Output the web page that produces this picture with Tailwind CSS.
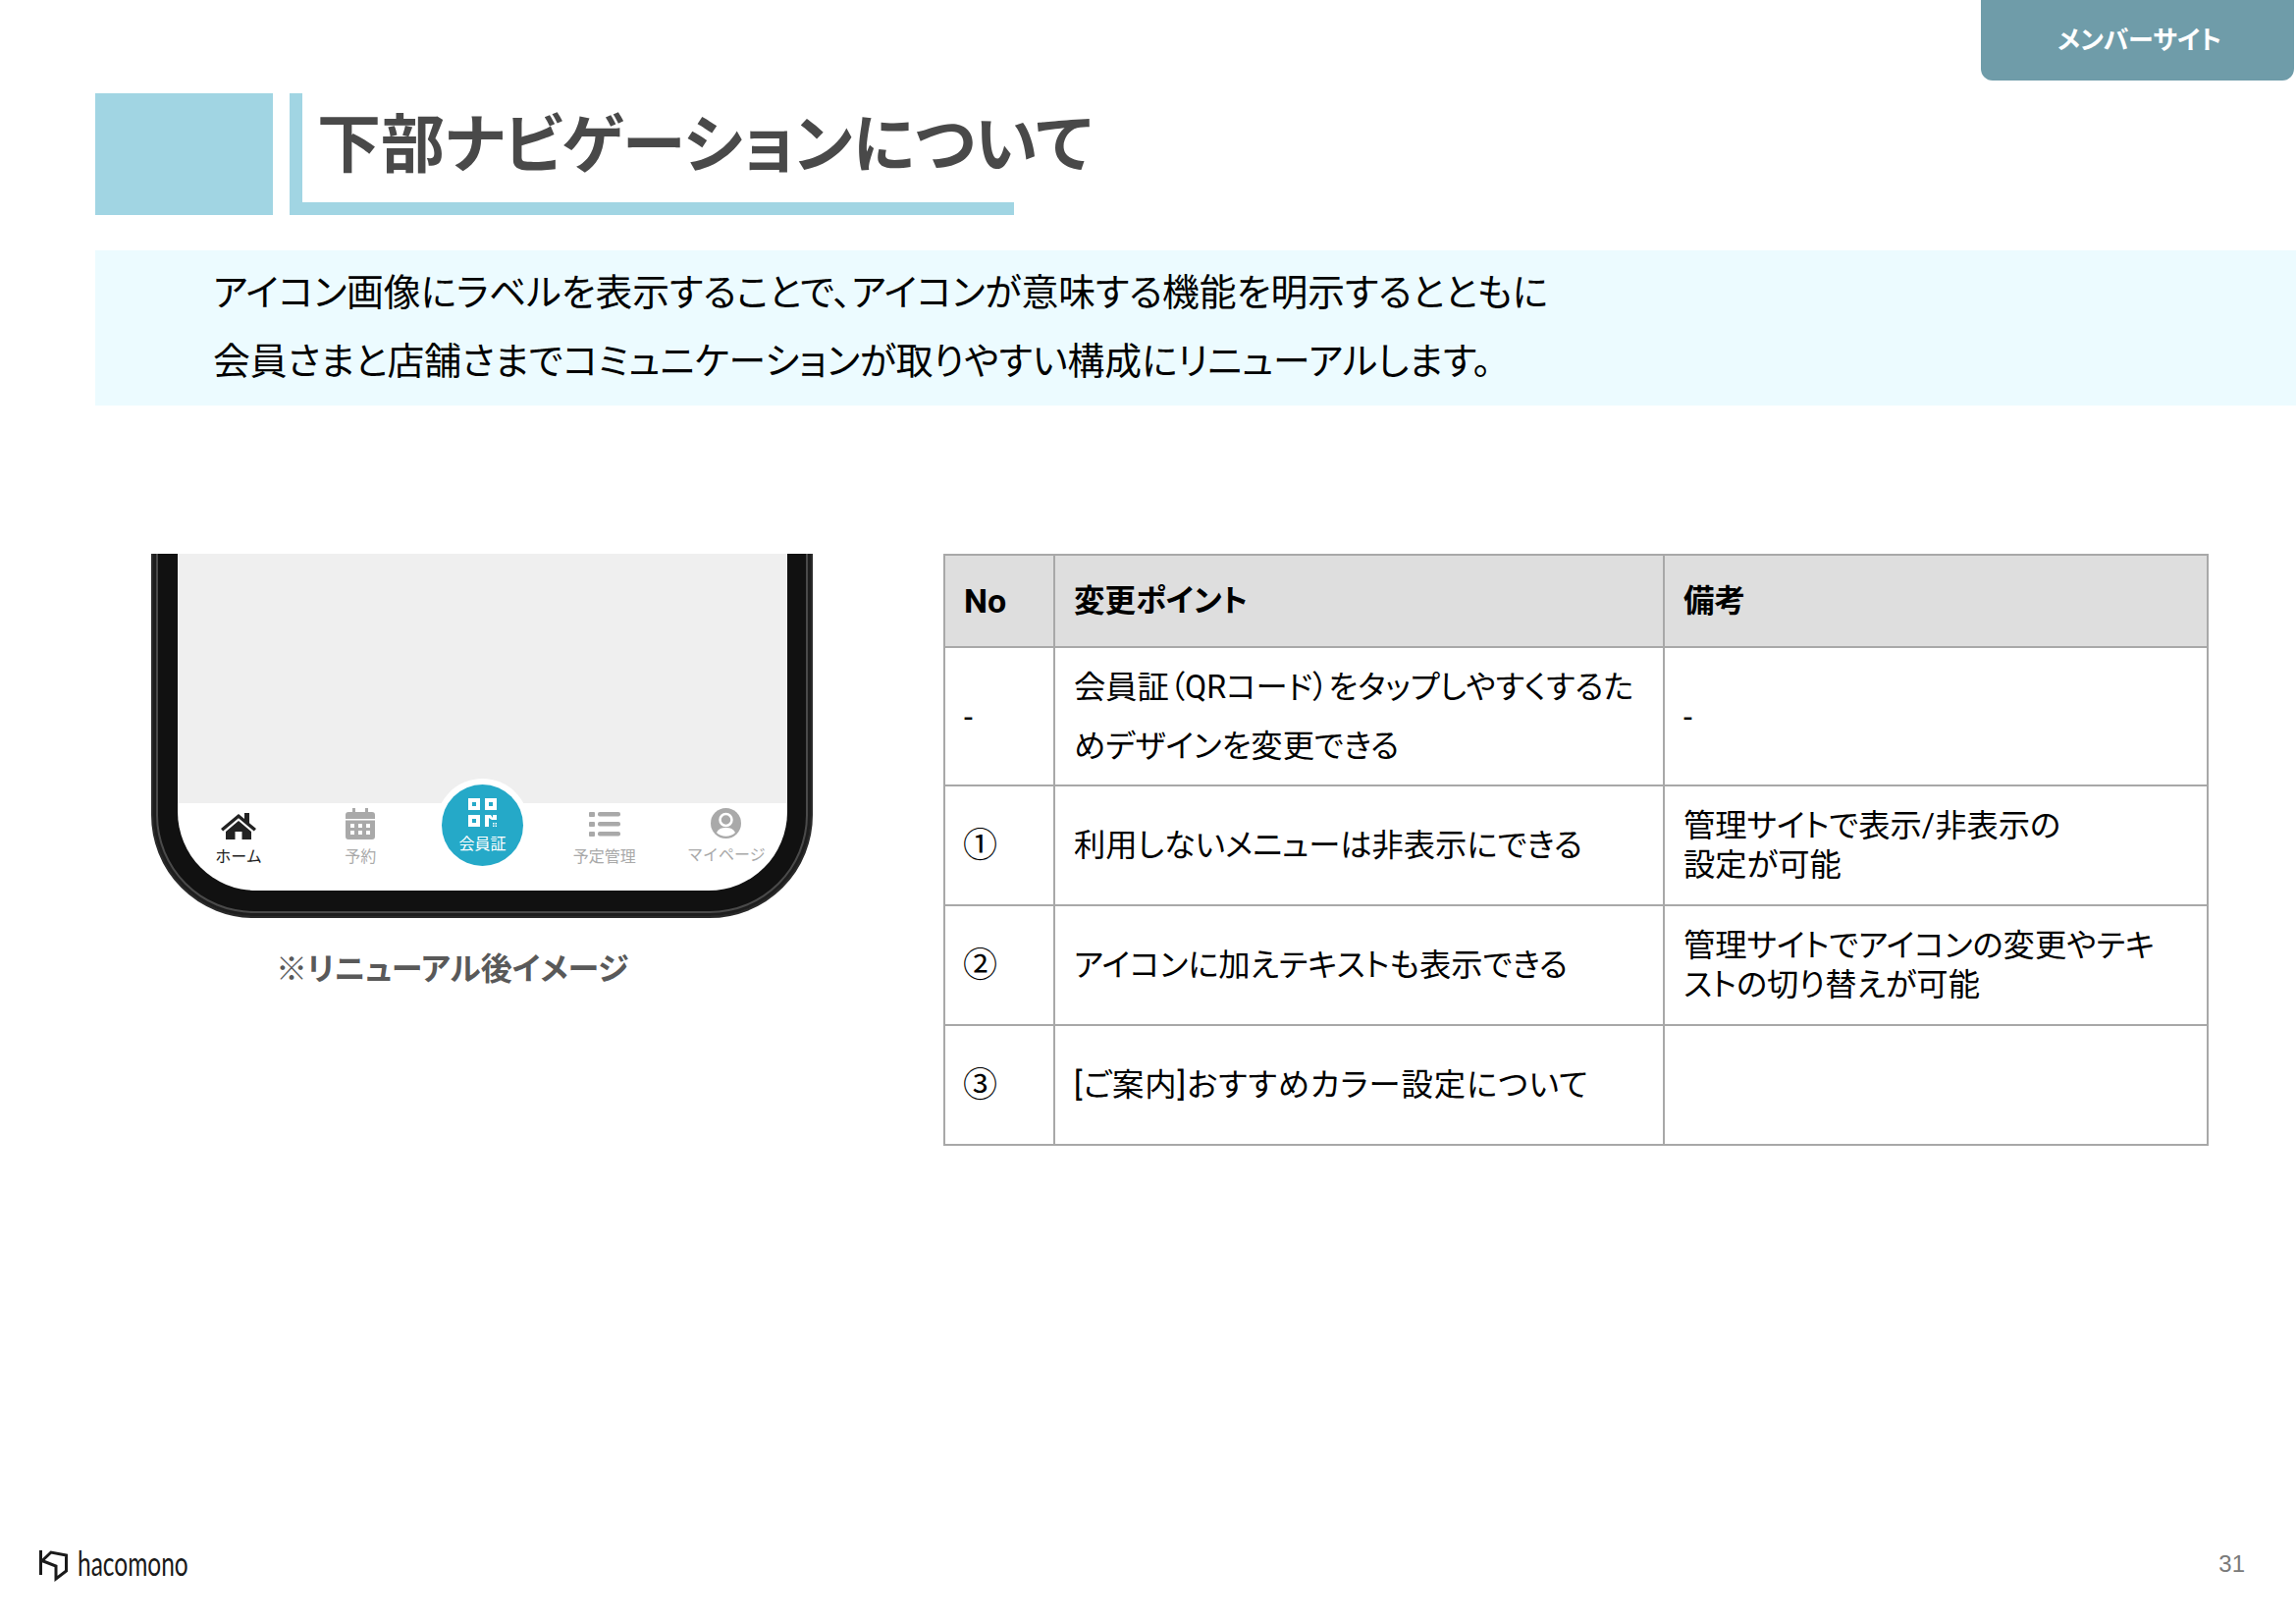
<!DOCTYPE html>
<html lang="ja">
<head>
<meta charset="utf-8">
<script src="https://cdn.jsdelivr.net/npm/@tailwindcss/browser@4"></script>
</head>
<body class="bg-white">
<div class="relative w-[2339px] h-[1653px] overflow-hidden bg-white text-black font-['Roboto','Noto_Sans_CJK_JP',sans-serif] [font-feature-settings:'palt']">
  <div class="absolute right-[2px] top-0 w-[319px] h-[82px] pl-[4px] bg-[#6f9ca9] rounded-b-[12px] flex items-center justify-center text-white font-bold text-[26px] text-center">メンバーサイト</div>

  <div class="pt-[95px] pl-[97px] flex gap-[17px] h-[219px]">
    <div class="w-[181px] h-[124px] bg-[#a1d5e3]"></div>
    <div class="w-[738px] h-[124px] border-l-[13px] border-b-[13px] border-[#a1d5e3] relative">
      <h1 class="absolute left-[15px] top-[5px] whitespace-nowrap text-[#494949] font-bold text-[65px] leading-[96px]">下部ナビゲーションについて</h1>
    </div>
  </div>

  <div class="mt-[36px] ml-[97px] h-[158px] bg-[#ecfbff] pl-[120px] pt-[8px] text-[37.8px] leading-[70px] text-black">
    <p class="whitespace-nowrap">アイコン画像にラベルを表示することで、アイコンが意味する機能を明示するとともに</p>
    <p class="whitespace-nowrap">会員さまと店舗さまでコミュニケーションが取りやすい構成にリニューアルします。</p>
  </div>

  <div class="mt-[151px] flex items-start">
    <div class="ml-[154px] w-[674px] shrink-0">
      <div class="h-[371px] overflow-hidden">
        <div class="relative h-[381px] -mt-[10px] bg-[#111] rounded-b-[105px] border-2 border-[#2a2a2a] overflow-hidden shadow-[inset_0_0_0_3px_#1e1e1e,inset_0_0_0_5px_#4a4a4a]">
          <div class="absolute left-[25px] right-[24px] top-[8px] bottom-[26px] bg-white rounded-b-[80px] overflow-hidden">
            <div class="h-[254px] bg-[#efefef]"></div>
            <div class="relative grid grid-cols-5 text-center text-[16px] text-[#a9a9a9] pt-[7px] [font-feature-settings:normal]">
              <div class="flex flex-col items-center text-[#222]">
                <svg class="w-[38px] h-[30px]" viewBox="0 0 38 30" fill="#222"><path d="M19 4 1 19l2.2 2.500L19 8.300l15.800 13.200L37 19l-7-5.800V3h-5v5.900z"/><path d="M19 11 6 22v8h9.500v-8h7v8H32v-8z"/></svg>
                <span class="mt-[9px] leading-[18px]">ホーム</span>
              </div>
              <div class="flex flex-col items-center">
                <svg class="w-[30px] h-[32px] -mt-[2px]" viewBox="0 0 30 32" fill="#a9a9a9"><rect x="7" y="0" width="3" height="6"/><rect x="20" y="0" width="3" height="6"/><path d="M3 4h24a3 3 0 0 1 3 3v4H0V7a3 3 0 0 1 3-3z"/><path fill-rule="evenodd" d="M0 12.500h30V29a3 3 0 0 1-3 3H3a3 3 0 0 1-3-3zM5 16v4h4v-4zm8 0v4h4v-4zm8 0v4h4v-4zM5 23v4h4v-4zm8 0v4h4v-4zm8 0v4h4v-4z"/></svg>
                <span class="mt-[9px] leading-[18px]">予約</span>
              </div>
              <div></div>
              <div class="flex flex-col items-center">
                <svg class="w-[32px] h-[26px] mt-[2px]" viewBox="0 0 32 26" fill="#a9a9a9"><rect x="0" y="0" width="6" height="5" rx="1"/><rect x="9" y="0" width="23" height="4.500" rx="2"/><rect x="0" y="10" width="6" height="5" rx="1"/><rect x="9" y="10" width="23" height="4.500" rx="2"/><rect x="0" y="20" width="6" height="5" rx="1"/><rect x="9" y="20" width="23" height="4.500" rx="2"/></svg>
                <span class="mt-[11px] leading-[18px]">予定管理</span>
              </div>
              <div class="flex flex-col items-center">
                <svg class="w-[31px] h-[31px] -mt-[2px]" viewBox="0 0 31 31"><circle cx="15.500" cy="15.500" r="15.500" fill="#a9a9a9"/><circle cx="15.500" cy="12" r="6" fill="none" stroke="#fff" stroke-width="2.500"/><path d="M6 25c2-4 5-5 9.500-5s7.500 1 9.500 5c-2.500 2.500-6 3.700-9.500 3.700S8.500 27.500 6 25z" fill="#fff"/></svg>
                <span class="mt-[8px] leading-[18px] whitespace-nowrap">マイページ</span>
              </div>
            </div>
            <div class="absolute left-[263px] top-[229px] w-[95px] h-[95px] rounded-full bg-white"></div>
            <div class="absolute left-[269px] top-[235px] w-[83px] h-[83px] rounded-full bg-[#25a9c8] flex flex-col items-center text-white text-[16px] [font-feature-settings:normal]">
              <svg class="w-[29px] h-[29px] mt-[14px]" viewBox="0 0 29 29" fill="#fff"><path fill-rule="evenodd" d="M0 0h12v12H0zM4 4v4h4V4zM17 0h12v12H17zM21 4v4h4V4zM0 17h12v12H0zM4 21v4h4v-4z"/><path d="M17 17h4v12h-4zM21 17h2l2 3v-3h4v5h-5l-3-2zM25 25h1.500v1.500H25zM27.500 25H29v1.500h-1.500zM25 27.500h1.500V29H25zM27.500 27.500H29V29h-1.500z"/></svg>
              <span class="mt-[8px] leading-[20px]">会員証</span>
            </div>
          </div>
        </div>
      </div>
      <p class="mt-[29px] ml-[127px] whitespace-nowrap text-[#595959] font-bold text-[32px] leading-[46px]">※リニューアル後イメージ</p>
    </div>

    <table class="ml-[133px] w-[1287px] table-fixed border-collapse text-[32.3px] text-black">
      <colgroup><col class="w-[112px]"><col class="w-[621px]"><col class="w-[554px]"></colgroup>
      <thead>
        <tr class="h-[94px] bg-[#dedede] font-bold text-left">
          <th class="border-2 border-[#a8a8a8] pl-[19px] font-bold text-[34px]">No</th>
          <th class="border-2 border-[#a8a8a8] pl-[19px] pt-[2px] font-bold text-[31.5px]">変更ポイント</th>
          <th class="border-2 border-[#a8a8a8] pl-[19px] pt-[2px] font-bold text-[31.5px]">備考</th>
        </tr>
      </thead>
      <tbody>
        <tr class="h-[141px]">
          <td class="border-2 border-[#a8a8a8] pl-[19px] pt-[3px]">-</td>
          <td class="border-2 border-[#a8a8a8] pl-[19px] pt-[1px] leading-[60px] whitespace-nowrap">会員証（QRコード）をタップしやすくするた<br>めデザインを変更できる</td>
          <td class="border-2 border-[#a8a8a8] pl-[19px] pt-[3px]">-</td>
        </tr>
        <tr class="h-[122px]">
          <td class="border-2 border-[#a8a8a8] pl-[18px] pt-[3px] text-[35px]">①</td>
          <td class="border-2 border-[#a8a8a8] pl-[19px]">利用しないメニューは非表示にできる</td>
          <td class="border-2 border-[#a8a8a8] pl-[19px] leading-[40px]">管理サイトで表示/非表示の<br>設定が可能</td>
        </tr>
        <tr class="h-[122px]">
          <td class="border-2 border-[#a8a8a8] pl-[18px] pt-[3px] text-[35px]">②</td>
          <td class="border-2 border-[#a8a8a8] pl-[19px]">アイコンに加えテキストも表示できる</td>
          <td class="border-2 border-[#a8a8a8] pl-[19px] leading-[40px]">管理サイトでアイコンの変更やテキ<br>ストの切り替えが可能</td>
        </tr>
        <tr class="h-[122px]">
          <td class="border-2 border-[#a8a8a8] pl-[18px] pt-[3px] text-[35px]">③</td>
          <td class="border-2 border-[#a8a8a8] pl-[19px] tracking-[1px]">[ご案内]おすすめカラー設定について</td>
          <td class="border-2 border-[#a8a8a8] pl-[19px]"></td>
        </tr>
      </tbody>
    </table>
  </div>

  <div class="absolute left-[40px] top-[1579px] flex items-center gap-[10px]">
    <svg class="w-[29px] h-[32px]" viewBox="0 0 29 32" fill="none" stroke="#1a1a1a" stroke-width="3"><path d="M1.500 0v25M1.500 12 12 2l15.500 3v16L17 29V16L1.500 10"/></svg>
    <span class="text-[#1a1a1a] text-[34px] leading-[32px] -mt-[6px] font-['Lato'] origin-left scale-x-[0.72] inline-block w-[113px] whitespace-nowrap">hacomono</span>
  </div>
  <div class="absolute right-[52px] top-[1579px] text-[#7a7a7a] text-[24px] leading-[28px] font-['Liberation_Sans']">31</div>
</div>
</body>
</html>
